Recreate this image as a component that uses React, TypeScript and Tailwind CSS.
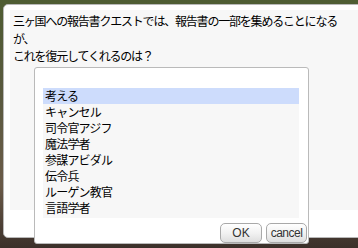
const items = ['考える', 'キャンセル', '司令官アジフ', '魔法学者', '参謀アビダル', '伝令兵', 'ルーゲン教官', '言語学者'];

const jp = { fontFamily: '"Noto Sans CJK JP", "Noto Sans", sans-serif' };

export default function App() {
  return (
    <div
      className="relative h-[248px] w-[358px] overflow-hidden bg-[linear-gradient(180deg,#4f5d33_0%,#5b5a40_40%,#6a5a48_75%,#3b302a_100%)] pl-[3px] pt-[4px]"
      style={jp}
    >
      {/* NPC message window */}
      <div className="h-[234px] w-[380px] rounded-[5px] border border-[#b8b8b8] bg-white pl-[6px] pt-[5px]">
        <div className="h-[200px] w-[370px] bg-[#f7f7f7] pl-[3px] pt-[2px] text-[12px] leading-[17.5px] tracking-[-1.2px] text-black">
          <div>三ヶ国への報告書クエストでは、報告書の一部を集めることになる</div>
          <div>が、</div>
          <div>これを復元してくれるのは？</div>
        </div>
      </div>

      {/* selection menu */}
      <div className="absolute left-[34px] top-[67px] flex h-[177px] w-[275px] flex-col rounded-[3px] border border-[#bababa] bg-white pt-[20px]">
        <div className="ml-[8px] h-[130px] w-[256px] bg-[#f7f7f7]">
          {items.map((it, i) => (
            <div
              key={it}
              className={`h-[16px] pl-[2px] text-[12px] leading-[16px] tracking-[-0.8px] text-black ${i === 0 ? 'bg-[#cddcfc]' : ''}`}
            >
              {it}
            </div>
          ))}
        </div>
        <div className="mt-[5px] flex justify-end gap-[4px] pr-[1px]">
          <button className="h-[20px] w-[42px] rounded-[5px] border border-[#a9a9a9] bg-[linear-gradient(180deg,#ffffff_0%,#f2f2f2_50%,#dedede_100%)] text-[12px] leading-[18px] text-[#333]" style={{ fontFamily: '"Liberation Sans", sans-serif' }}>
            OK
          </button>
          <button className="h-[20px] w-[41px] rounded-[5px] border border-[#a9a9a9] bg-[linear-gradient(180deg,#ffffff_0%,#f2f2f2_50%,#dedede_100%)] text-[12px] leading-[18px] tracking-[-0.5px] text-[#333]" style={{ fontFamily: '"Liberation Sans", sans-serif' }}>
            cancel
          </button>
        </div>
      </div>
    </div>
  );
}
